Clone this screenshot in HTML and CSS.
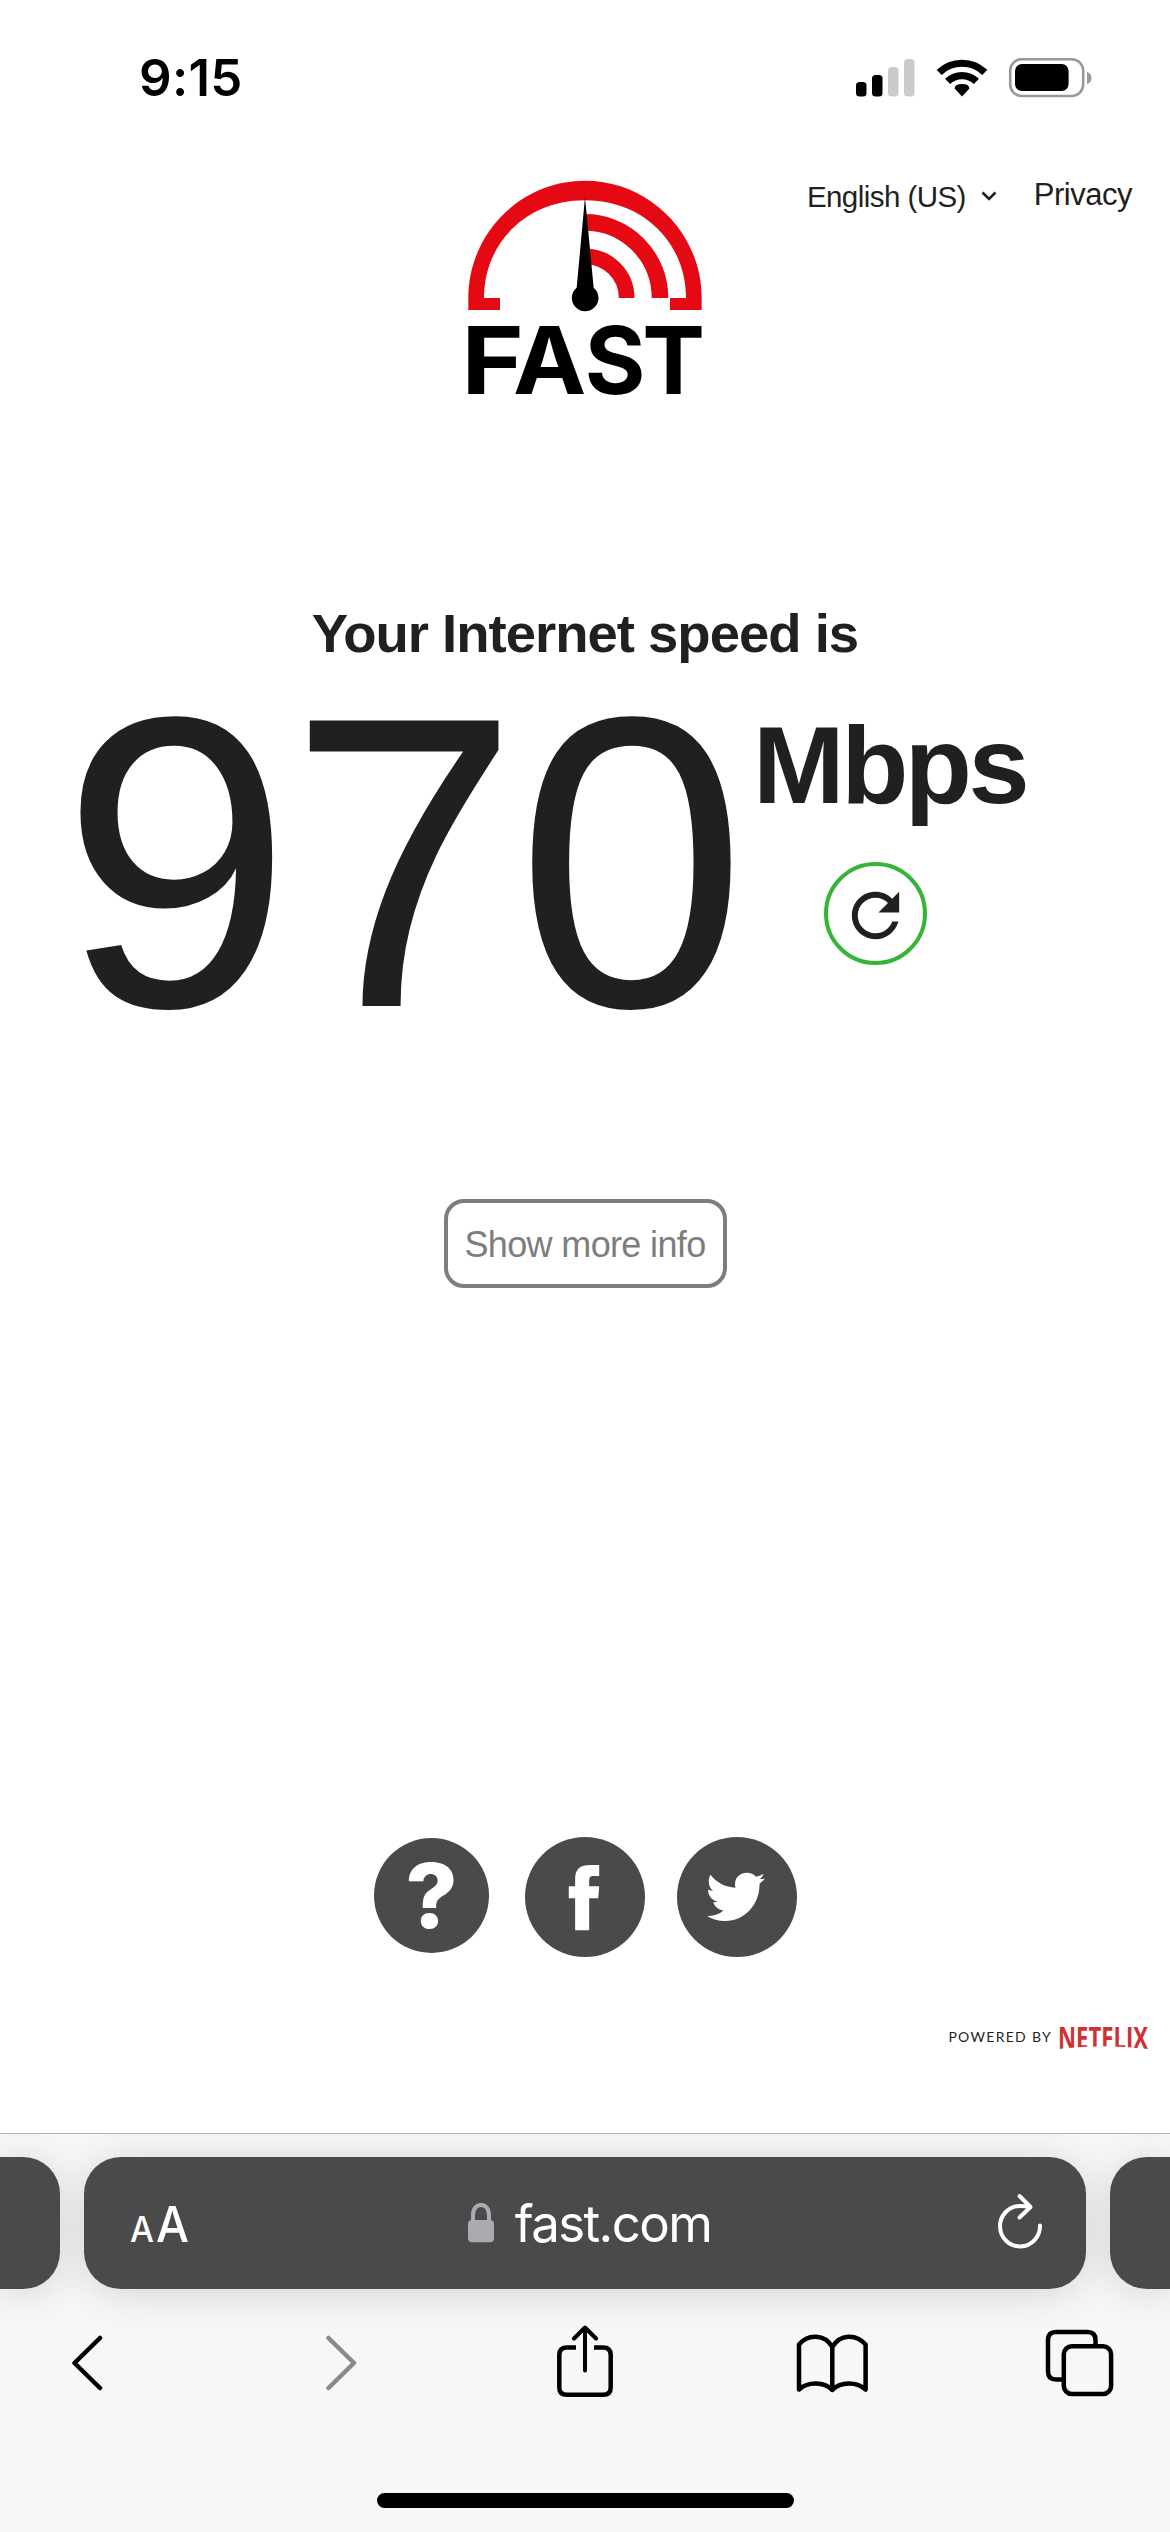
FILE: index.html
```html
<!DOCTYPE html>
<html lang="en">
<head>
<meta charset="utf-8">
<title>FAST</title>
<link rel="stylesheet" href="styles.css">
</head>
<body>
<div class="status">
  <span class="time">9:15</span>
  <svg class="status-icons" width="238" height="44" viewBox="855 56 238 44">
    <rect x="856" y="82" width="10.5" height="14.5" rx="3.5"/>
    <rect x="872" y="75" width="10.5" height="21.5" rx="3.5"/>
    <rect x="888" y="67" width="10.5" height="29.5" rx="3.5" fill="#cbcbcb"/>
    <rect x="904" y="59" width="10.5" height="37.5" rx="3.5" fill="#cbcbcb"/>
    <g fill="none" stroke="#000" stroke-width="7.2">
      <path d="M939.2 72.4A33 33 0 0 1 984.8 72.4"/>
      <path d="M947.6 81.4A20.6 20.6 0 0 1 976.4 81.4"/>
    </g>
    <path d="M962 96.5L954.6 88.4Q954.8 84 962 84T969.4 88.4Z"/>
    <rect x="1010.2" y="59.2" width="73" height="36.8" rx="11.5" fill="none" stroke="#999" stroke-width="2.6"/>
    <rect x="1015" y="64" width="53.6" height="27" rx="7"/>
    <path d="M1087 72Q1091.5 73.500 1091.500 78T1087 84Z" fill="#999"/>
  </svg>
</div>

<header class="top">
  <svg class="logo" width="234" height="216" viewBox="84 60 702 648">
    <g fill="none" stroke="#e50914">
      <path d="M435 187A225 227 0 0 1 660 414" stroke-width="50"/>
      <path d="M435 289A125 125 0 0 1 560 414" stroke-width="47"/>
    </g>
    <path d="M85 450V414C85 220 242 62 435 62S785 220 785 414V450H690V414H738C738 248 610 121 435 121S132 248 132 414H180V450Z" fill="#e50914"/>
    <path d="M435 112L461 383A40 40 0 1 1 410 383Z"/>
    <g class="logo-text">
      <text x="64" y="703" textLength="188" lengthAdjust="spacingAndGlyphs">F</text>
      <text x="219" y="703" textLength="220" lengthAdjust="spacingAndGlyphs">A</text>
      <text x="434" y="703" textLength="182" lengthAdjust="spacingAndGlyphs">S</text>
      <text x="607" y="703" textLength="188" lengthAdjust="spacingAndGlyphs">T</text>
    </g>
  </svg>
  <nav class="links">
    <span class="lang">English (US)</span>
    <svg class="caret" width="16" height="10" viewBox="0 0 16 10"><path d="M1.500 1.500L8 8L14.500 1.500" fill="none" stroke="#221f1f" stroke-width="2.600"/></svg>
    <span class="privacy">Privacy</span>
  </nav>
</header>

<main class="result">
  <h1 class="heading">Your Internet speed is</h1>
  <div class="speed">
    <span class="value">970</span>
    <div class="side">
      <span class="unit">Mbps</span>
      <span class="again">
        <svg width="71" height="71" viewBox="0 0 24 24"><path fill="#221f1f" d="M17.650 6.350C16.200 4.900 14.210 4 12 4c-4.420 0-7.990 3.580-7.990 8s3.570 8 7.990 8c3.730 0 6.840-2.550 7.730-6h-2.080c-.82 2.330-3.040 4-5.650 4-3.310 0-6-2.690-6-6s2.690-6 6-6c1.660 0 3.140.69 4.220 1.780L13 11h7V4l-2.350 2.350z"/></svg>
      </span>
    </div>
  </div>
  <button class="more">Show more info</button>
</main>

<div class="social">
  <span class="help">?</span>
  <svg class="facebook" width="120" height="120" viewBox="495 51 359 359">
    <circle cx="674.500" cy="230.500" r="179.500" fill="#4a4a4a"/>
    <path fill="#fff" d="M645 330V234H626V198H645V176C645 148 660 135 690 135H717V168H698Q687 168 687 180V198H717L714 234H687V330Z"/>
  </svg>
  <svg class="twitter" width="120" height="120" viewBox="951 51 359 359">
    <circle cx="1130.500" cy="230.500" r="179.500" fill="#4a4a4a"/>
    <path fill="#fff" d="M1051 164C1069 187 1095 201 1126 203C1119 175 1139 158 1160 158C1171 158 1181 162 1187 170Q1199 168 1210 161Q1207 171 1199 177Q1206 177 1214 175Q1207 184 1198 190C1199 253 1153 302 1095 302Q1064 302 1041 287Q1070 289 1090 271Q1068 268 1059 246Q1067 247 1073 245C1054 240 1044 226 1044 208Q1051 212 1059 212C1045 201 1042 181 1051 164Z"/>
  </svg>
</div>

<footer class="powered">
  <span>POWERED BY</span>
  <svg class="netflix" width="90" height="23" viewBox="-1 0 90 23">
    <clipPath id="curve"><path d="M-1 0H89V23Q44 17.500 -1 23Z"/></clipPath>
    <text x="-1" y="22.500" textLength="90" lengthAdjust="spacingAndGlyphs" clip-path="url(#curve)">NETFLIX</text>
  </svg>
</footer>

<div class="browser">
  <div class="tabs">
    <div class="tab edge-left"></div>
    <div class="tab address">
      <svg class="aa" width="60" height="44" viewBox="130 2202 60 44">
        <text x="130" y="2242" font-size="35" textLength="24" lengthAdjust="spacingAndGlyphs">A</text>
        <text x="156" y="2242" font-size="50" textLength="33" lengthAdjust="spacingAndGlyphs">A</text>
      </svg>
      <div class="site">
        <svg width="26" height="40" viewBox="0 0 26 40"><path d="M5 20V12C5 -1.500 21 -1.500 21 12V20" fill="none" stroke="#acaab1" stroke-width="4"/><rect y="17" width="26" height="22.300" rx="4" fill="#acaab1"/></svg>
        <span class="host">fast.com</span>
      </div>
      <svg class="reload" width="48" height="58" viewBox="996 2192 48 58" fill="none" stroke="#fff" stroke-width="4" stroke-linecap="round" stroke-linejoin="round">
        <path d="M1040 2225.500A20 20.200 0 1 1 1020 2206Q1026 2206 1030 2207"/><path d="M1019.500 2196L1030.500 2207L1019.500 2217.500"/>
      </svg>
    </div>
    <div class="tab edge-right"></div>
  </div>
  <div class="tools">
    <svg width="32" height="56" viewBox="71 2336 32 56"><path d="M100 2339L74.500 2364L100 2389"/></svg>
    <svg class="dim" width="32" height="56" viewBox="325 2336 32 56"><path d="M328.500 2339L354 2364L328.500 2389"/></svg>
    <svg class="share" width="58" height="74" viewBox="556 2326 58 74"><path d="M576 2348.500H567Q559.300 2348.500 559.300 2356V2388.500Q559.300 2395.800 567 2395.800H603Q610.700 2395.800 610.700 2388.500V2356Q610.700 2348.500 603 2348.500H594" stroke-linecap="butt"/><path d="M585 2371.500V2329M574 2339.500L585 2328.500L596 2339.500" stroke-width="4"/></svg>
    <svg class="book" width="72" height="60" viewBox="796 2334 72 60"><path d="M832.300 2391V2348C825 2335 808 2334.500 799 2345.500V2390.500C808 2382.500 824 2382.500 832.300 2391C841 2382.500 856 2382.500 865.600 2390.500V2345.500C856 2334.500 840 2335 832.300 2348"/></svg>
    <svg class="copies" width="70" height="68" viewBox="1045 2330 70 68"><path d="M1062 2380.500H1056Q1048 2380.500 1048 2372.500V2341Q1048 2333 1056 2333H1087.500Q1095.500 2333 1095.500 2341V2347" stroke-linecap="butt"/><rect x="1063.800" y="2347.300" width="47.300" height="47.700" rx="8"/></svg>
  </div>
  <div class="home"></div>
</div>
</body>
</html>
```

FILE: styles.css
```css
* { box-sizing: border-box; }

body {
  margin: 0;
  width: 1170px;
  height: 2532px;
  overflow: hidden;
  display: flex;
  flex-direction: column;
  background: #fff;
  color: #221f1f;
  font-family: "Liberation Sans", Arial, sans-serif;
}

svg { display: block; flex: none; }

.status {
  height: 150px;
  padding: 48px 77px 0 139px;
  display: flex;
  justify-content: space-between;
  align-items: flex-start;
  color: #000;
}

.time {
  font: 600 51px/60px Inter, sans-serif;
  letter-spacing: 0.3px;
}

.status-icons { margin-top: 8px; }

.top {
  height: 454px;
  display: grid;
  grid-template-columns: 1fr 234px 1fr;
  align-items: start;
}

.logo {
  grid-column: 2;
  margin-top: 30px;
  overflow: visible;
}

.logo-text {
  font: 700 282px Inter, sans-serif;
  fill: #000;
}

.links {
  display: flex;
  align-items: flex-start;
  justify-content: flex-end;
  padding: 25px 38px 0 0;
  line-height: 40px;
}

.lang {
  margin-top: 2px;
  font-size: 29.5px;
  letter-spacing: -0.55px;
}

.caret { margin: 16px 37px 0 15px; }

.privacy {
  font-size: 31px;
  letter-spacing: -0.5px;
}

.result {
  height: 1233px;
  display: flex;
  flex-direction: column;
  align-items: center;
}

.heading {
  margin: 0 0 48px;
  font-size: 54.5px;
  line-height: 60px;
  letter-spacing: -1px;
}

.speed {
  align-self: flex-start;
  display: flex;
  align-items: flex-start;
  height: 300px;
  margin-left: 61px;
}

.value {
  width: 684px;
  font-size: 415px;
  line-height: 301px;
  letter-spacing: -3.300px;
}

.side {
  display: flex;
  flex-direction: column;
  align-items: flex-start;
  padding-top: 3px;
  margin-left: 8px;
}

.unit {
  font-size: 110px;
  font-weight: bold;
  line-height: 100px;
  letter-spacing: -3.500px;
}

.again {
  width: 103px;
  height: 103px;
  margin: 47px 0 0 71px;
  padding-top: 4px;
  border: 4px solid #35b435;
  border-radius: 50%;
  display: flex;
  align-items: center;
  justify-content: center;
}

.more {
  width: 283px;
  height: 89px;
  margin-top: 187px;
  padding: 2px 0 0;
  border: 4px solid #7d7d7d;
  border-radius: 20px;
  background: none;
  color: #7d7d7d;
  font: 36px "Liberation Sans", Arial, sans-serif;
  letter-spacing: -0.65px;
}

.social {
  display: flex;
  padding-left: 374px;
  height: 183px;
  align-items: flex-start;
}

.help {
  width: 115px;
  height: 115px;
  margin-top: 1px;
  border-radius: 50%;
  background: #4a4a4a;
  color: #fff;
  text-align: center;
  font: 800 90px/115px Inter, sans-serif;
}

.facebook { margin-left: 36px; }
.twitter { margin-left: 32px; }

.powered {
  height: 113px;
  display: flex;
  align-items: flex-start;
  justify-content: flex-end;
  padding: 6px 22px 0 0;
}

.powered span {
  margin: 1px 6px 0 0;
  font: 14px/20px Lato, sans-serif;
  letter-spacing: 1.300px;
}

.netflix {
  font: 700 31px "Open Sans", sans-serif;
  fill: #d22f35;
}

.browser {
  height: 399px;
  border-top: 1px solid #b3b3b3;
  background: #f7f7f7;
  overflow: hidden;
  display: flex;
  flex-direction: column;
}

.tabs {
  display: grid;
  grid-template-columns: 60px 1002px 60px;
  gap: 24px;
  padding-top: 23px;
}

.tab {
  height: 132px;
  background: #4a4a4a;
  border-radius: 37px;
  box-shadow: 0 4px 40px rgba(0, 0, 0, 0.14);
}

.edge-left { border-radius: 0 37px 37px 0; }
.edge-right { border-radius: 37px 0 0 37px; }

.address {
  display: flex;
  align-items: flex-start;
  justify-content: space-between;
  padding: 35px 42px 0 46px;
}

.aa {
  margin-top: 10px;
  font-family: Inter, sans-serif;
  font-weight: 500;
  fill: #fff;
}

.site {
  display: flex;
  margin: 11px 7px 0 0;
}

.host {
  margin: -12px 0 0 21px;
  color: #fff;
  font: 51px/66px Inter, sans-serif;
  letter-spacing: -1.600px;
}

.tools {
  display: grid;
  grid-template-columns: 254px 231px 240px 249px 70px;
  height: 200px;
  padding: 36px 0 0 71px;
  align-items: start;
  fill: none;
  stroke: #000;
  stroke-width: 4.500px;
  stroke-linecap: round;
  stroke-linejoin: round;
}

.tools svg { margin-top: 10px; }
.tools .dim { stroke: #8a8a8a; }
.tools .share { margin-top: 0; }
.tools .book { margin-top: 8px; }
.tools .copies { margin-top: 4px; }

.home {
  align-self: center;
  width: 417px;
  height: 15px;
  margin-top: 4px;
  border-radius: 8px;
  background: #000;
}
```
